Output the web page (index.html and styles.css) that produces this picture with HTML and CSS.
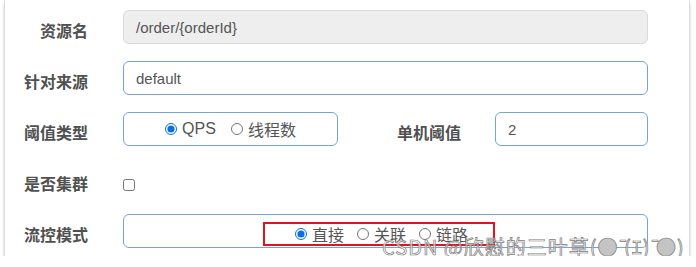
FILE: index.html
```html
<!DOCTYPE html>
<html lang="en">

<head>
    <meta charset="UTF-8">
    <meta name="viewport" content="width=device-width, initial-scale=1.0">
    <title>流控规则</title>
    <link rel="stylesheet" href="styles.css">
</head>

<body>
    <div class="panel">
        <form class="rule-form">
            <div class="form-row">
                <label class="form-label">资源名</label>
                <div class="field field-disabled field-wide">/order/{orderId}</div>
            </div>
            <div class="form-row">
                <label class="form-label">针对来源</label>
                <div class="field field-wide">default</div>
            </div>
            <div class="form-row">
                <label class="form-label">阈值类型</label>
                <div class="field field-short radio-box">
                    <label class="radio"><input type="radio" name="grade" checked> QPS</label>
                    <label class="radio"><input type="radio" name="grade"> 线程数</label>
                </div>
                <label class="form-label form-label-second">单机阈值</label>
                <div class="field field-count">2</div>
            </div>
            <div class="form-row">
                <label class="form-label">是否集群</label>
                <input class="cluster-check" type="checkbox">
            </div>
            <div class="form-row">
                <label class="form-label">流控模式</label>
                <div class="field field-wide mode-box">
                    <div class="mode-group">
                        <label class="radio"><input type="radio" name="strategy" checked> 直接</label>
                        <label class="radio"><input type="radio" name="strategy"> 关联</label>
                        <label class="radio"><input type="radio" name="strategy"> 链路</label>
                    </div>
                </div>
            </div>
        </form>
        <div class="watermark">CSDN @欣慰的三叶草(<span class="dot">●</span> ̄(ｴ) ̄<span class="dot">●</span>)</div>
    </div>
</body>

</html>
```

FILE: styles.css
```css
body {
    margin: 0;
    background-color: #fff;
    font-family: "Liberation Sans", "Noto Sans CJK SC", Arial, sans-serif;
}

.panel {
    position: relative;
    box-sizing: border-box;
    width: 686px;
    height: 256px;
    margin-left: 4px;
    padding-top: 10px;
    background-color: #fff;
    border-left: 1px solid #dcdcdc;
    border-right: 1px solid #dcdcdc;
    box-shadow: 0 3px 3px -1px rgba(0, 0, 0, 0.45);
}

.rule-form {
    display: flex;
    flex-direction: column;
    gap: 17px;
}

.form-row {
    display: flex;
    align-items: center;
    height: 34px;
}

.form-label {
    box-sizing: border-box;
    width: 83px;
    margin-right: 35px;
    padding-top: 5px;
    text-align: right;
    font-family: "Noto Sans CJK SC", sans-serif;
    font-size: 16px;
    font-weight: bold;
    color: #505050;
}

.form-label-second {
    width: 123px;
    margin-right: 34px;
}

.field {
    box-sizing: border-box;
    display: flex;
    align-items: center;
    height: 34px;
    padding-left: 12px;
    border: 1px solid #78a3d8;
    border-radius: 6px;
    font-size: 15px;
    color: #555;
}

.field-disabled {
    background-color: #eee;
    border-color: #dadada;
}

.field-wide {
    width: 525px;
}

.field-short {
    width: 215px;
}

.field-count {
    width: 153px;
}

.radio-box {
    justify-content: center;
    gap: 15px;
    padding: 0;
}

.radio {
    display: flex;
    align-items: center;
    gap: 5px;
    font-family: "Liberation Sans", "Noto Sans CJK SC", sans-serif;
    font-size: 16px;
    color: #555;
}

.radio input {
    width: 12px;
    height: 12px;
    margin: 0;
    accent-color: #0a6ee8;
}

.cluster-check {
    width: 12px;
    height: 12px;
    margin: 9px 0 0 0;
}

.mode-box {
    align-items: flex-start;
    padding-left: 139px;
}

.mode-group {
    box-sizing: border-box;
    display: flex;
    align-items: center;
    gap: 13px;
    width: 232px;
    height: 24px;
    margin-top: 7px;
    padding-left: 30px;
    border: 2px solid #e3121b;
}

.watermark {
    position: absolute;
    left: 377px;
    top: 234px;
    font-family: "Noto Sans CJK SC", sans-serif;
    font-size: 20px;
    line-height: 26px;
    letter-spacing: 1px;
    white-space: nowrap;
    color: rgba(255, 255, 255, 0.7);
    -webkit-text-stroke: 0.7px #7a7a7a;
}

.watermark .dot {
    color: #c4c4c4;
}
```
